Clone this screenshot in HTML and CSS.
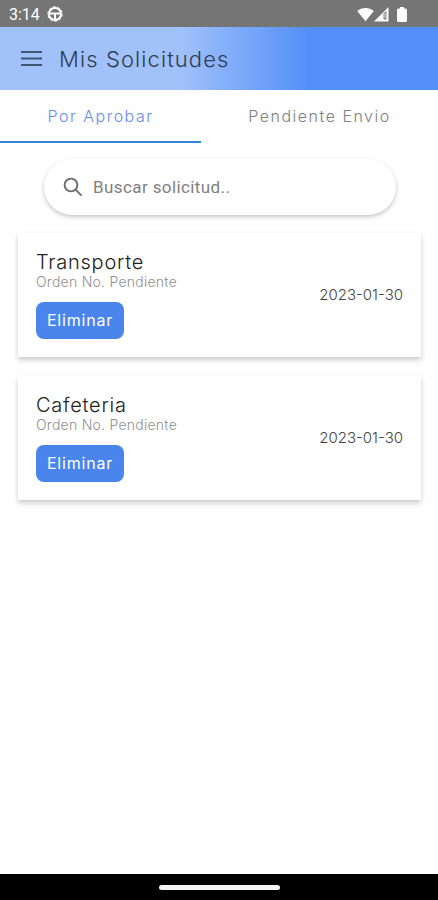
FILE: index.html
```
<!DOCTYPE html>
<html lang="es">
<head>
  <meta charset="UTF-8">
  <meta name="viewport" content="width=device-width, initial-scale=1">
  <title>Mis Solicitudes</title>
  <link rel="stylesheet" href="styles.css">
</head>
<body>

  <div class="status-bar">
    <span class="time">3:14</span>
    <svg width="16" height="16" viewBox="0 0 16 16" fill="none" stroke="#fff">
      <circle cx="8" cy="8" r="6" stroke-width="2"/>
      <circle cx="8" cy="8" r="7.2" stroke-width="1" stroke-dasharray="2.8 1.700"/>
      <path d="M3 7.500h10M8 8v5.500" stroke-width="2"/>
    </svg>
    <div class="status-icons">
      <svg width="17" height="15" viewBox="0 0 17 15" fill="#fff">
        <path d="M8.5 14.2L0.2 4C4.8 .1 12.2 .1 16.8 4z"/>
      </svg>
      <svg width="15" height="15" viewBox="0 0 15 15">
        <path d="M0 14.500L14.500 0V14.500z" fill="#fff"/>
        <path d="M9.500 6L12.500 4V12.500H9.500z" fill="#858585"/>
        <path d="M11 6v5" stroke="#ddd"/>
      </svg>
      <svg class="battery" width="10" height="15" viewBox="0 0 10 15" fill="#fff">
        <path d="M3 0h4v1.5h1.500Q10 1.500 10 3v10.500Q10 15 8.500 15h-7Q0 15 0 13.500V3Q0 1.500 1.500 1.500H3z"/>
      </svg>
    </div>
  </div>

  <header class="header">
    <svg width="21" height="15" viewBox="0 0 21 15" stroke="#435570" stroke-width="2">
      <path d="M0 1h21M0 7.500h21M0 14h21"/>
    </svg>
    <h1>Mis Solicitudes</h1>
  </header>

  <nav class="tabs">
    <a class="tab active">Por Aprobar</a>
    <a class="tab">Pendiente Envio</a>
  </nav>

  <main>
    <div class="search">
      <svg width="20" height="20" viewBox="0 0 20 20" fill="none" stroke="#6b6b6b" stroke-width="1.900">
        <circle cx="8" cy="8" r="6.400"/>
        <path d="M12.600 12.600l6 6"/>
      </svg>
      <span>Buscar solicitud..</span>
    </div>

    <div class="card">
      <div>
        <h2>Transporte</h2>
        <p>Orden No. Pendiente</p>
        <button>Eliminar</button>
      </div>
      <span class="date">2023-01-30</span>
    </div>

    <div class="card">
      <div>
        <h2>Cafeteria</h2>
        <p>Orden No. Pendiente</p>
        <button>Eliminar</button>
      </div>
      <span class="date">2023-01-30</span>
    </div>
  </main>

  <footer class="nav-bar">
    <div class="handle"></div>
  </footer>

</body>
</html>
```
FILE: styles.css
```
* {
  box-sizing: border-box;
}

body {
  margin: 0;
  height: 900px;
  display: flex;
  flex-direction: column;
  background-color: #fefefe;
  font-family: Inter, "Open Sans", sans-serif;
  font-weight: 300;
  white-space: nowrap;
  overflow: hidden;
}

.status-bar {
  display: flex;
  align-items: center;
  height: 27px;
  padding: 1px 31px 0 9px;
  background-color: #757575;
  color: white;
}

.time {
  width: 38px;
  font-family: Roboto, sans-serif;
  font-size: 16px;
  font-weight: 400;
}

.status-icons {
  display: flex;
  margin-left: auto;
}

.battery {
  margin-left: 8px;
}

.header {
  display: flex;
  align-items: center;
  gap: 17px;
  height: 63px;
  padding: 0 21px;
  background: linear-gradient(to right, #a1c1fb 0, #a1c1fb 180px, #548ff9 308px);
}

h1 {
  margin: 0;
  color: #303c50;
  font-size: 22px;
  font-weight: 300;
  letter-spacing: 1.1px;
}

.tabs {
  display: flex;
  height: 53px;
}

.tab {
  flex: 1;
  padding-top: 1px;
  color: #808080;
  font-size: 16px;
  line-height: 50px;
  letter-spacing: 1.5px;
  text-align: center;
}

.tab.active {
  flex: 0 0 201px;
  border-bottom: 2px solid #3088d4;
  color: #668cf0;
}

main {
  flex: 1;
  padding: 16px 17px 0 18px;
}

.search {
  display: flex;
  align-items: center;
  gap: 10px;
  height: 56px;
  margin: 0 25px 18px 26px;
  padding: 0 19px;
  border-radius: 28px;
  background-color: white;
  box-shadow: 0 2px 4px rgba(0, 0, 0, 0.22);
  color: #808080;
  font-family: Roboto, sans-serif;
  font-size: 17px;
  font-weight: 400;
  letter-spacing: 0.4px;
}

.card {
  display: flex;
  align-items: center;
  justify-content: space-between;
  height: 124px;
  margin-bottom: 19px;
  padding: 0 18px;
  background-color: white;
  box-shadow: 0 3px 5px rgba(0, 0, 0, 0.2);
}

h2 {
  margin: 0;
  color: #222;
  font-size: 20px;
  font-weight: 300;
  line-height: 23px;
  letter-spacing: 0.75px;
}

p {
  margin: 0 0 12px;
  color: #909090;
  font-size: 14px;
  line-height: 16px;
  letter-spacing: 0.25px;
}

button {
  display: block;
  width: 88px;
  height: 37px;
  padding: 0 0 1px;
  border: none;
  border-radius: 8px;
  background-color: #4985ec;
  color: white;
  font-family: inherit;
  font-size: 16px;
  font-weight: 400;
  letter-spacing: 0.8px;
}

.date {
  padding-bottom: 2px;
  color: #444;
  font-size: 15px;
}

.nav-bar {
  display: flex;
  align-items: center;
  justify-content: center;
  height: 26px;
  background-color: black;
}

.handle {
  width: 121px;
  height: 5px;
  border-radius: 3px;
  background-color: #f4f4f4;
}
```
